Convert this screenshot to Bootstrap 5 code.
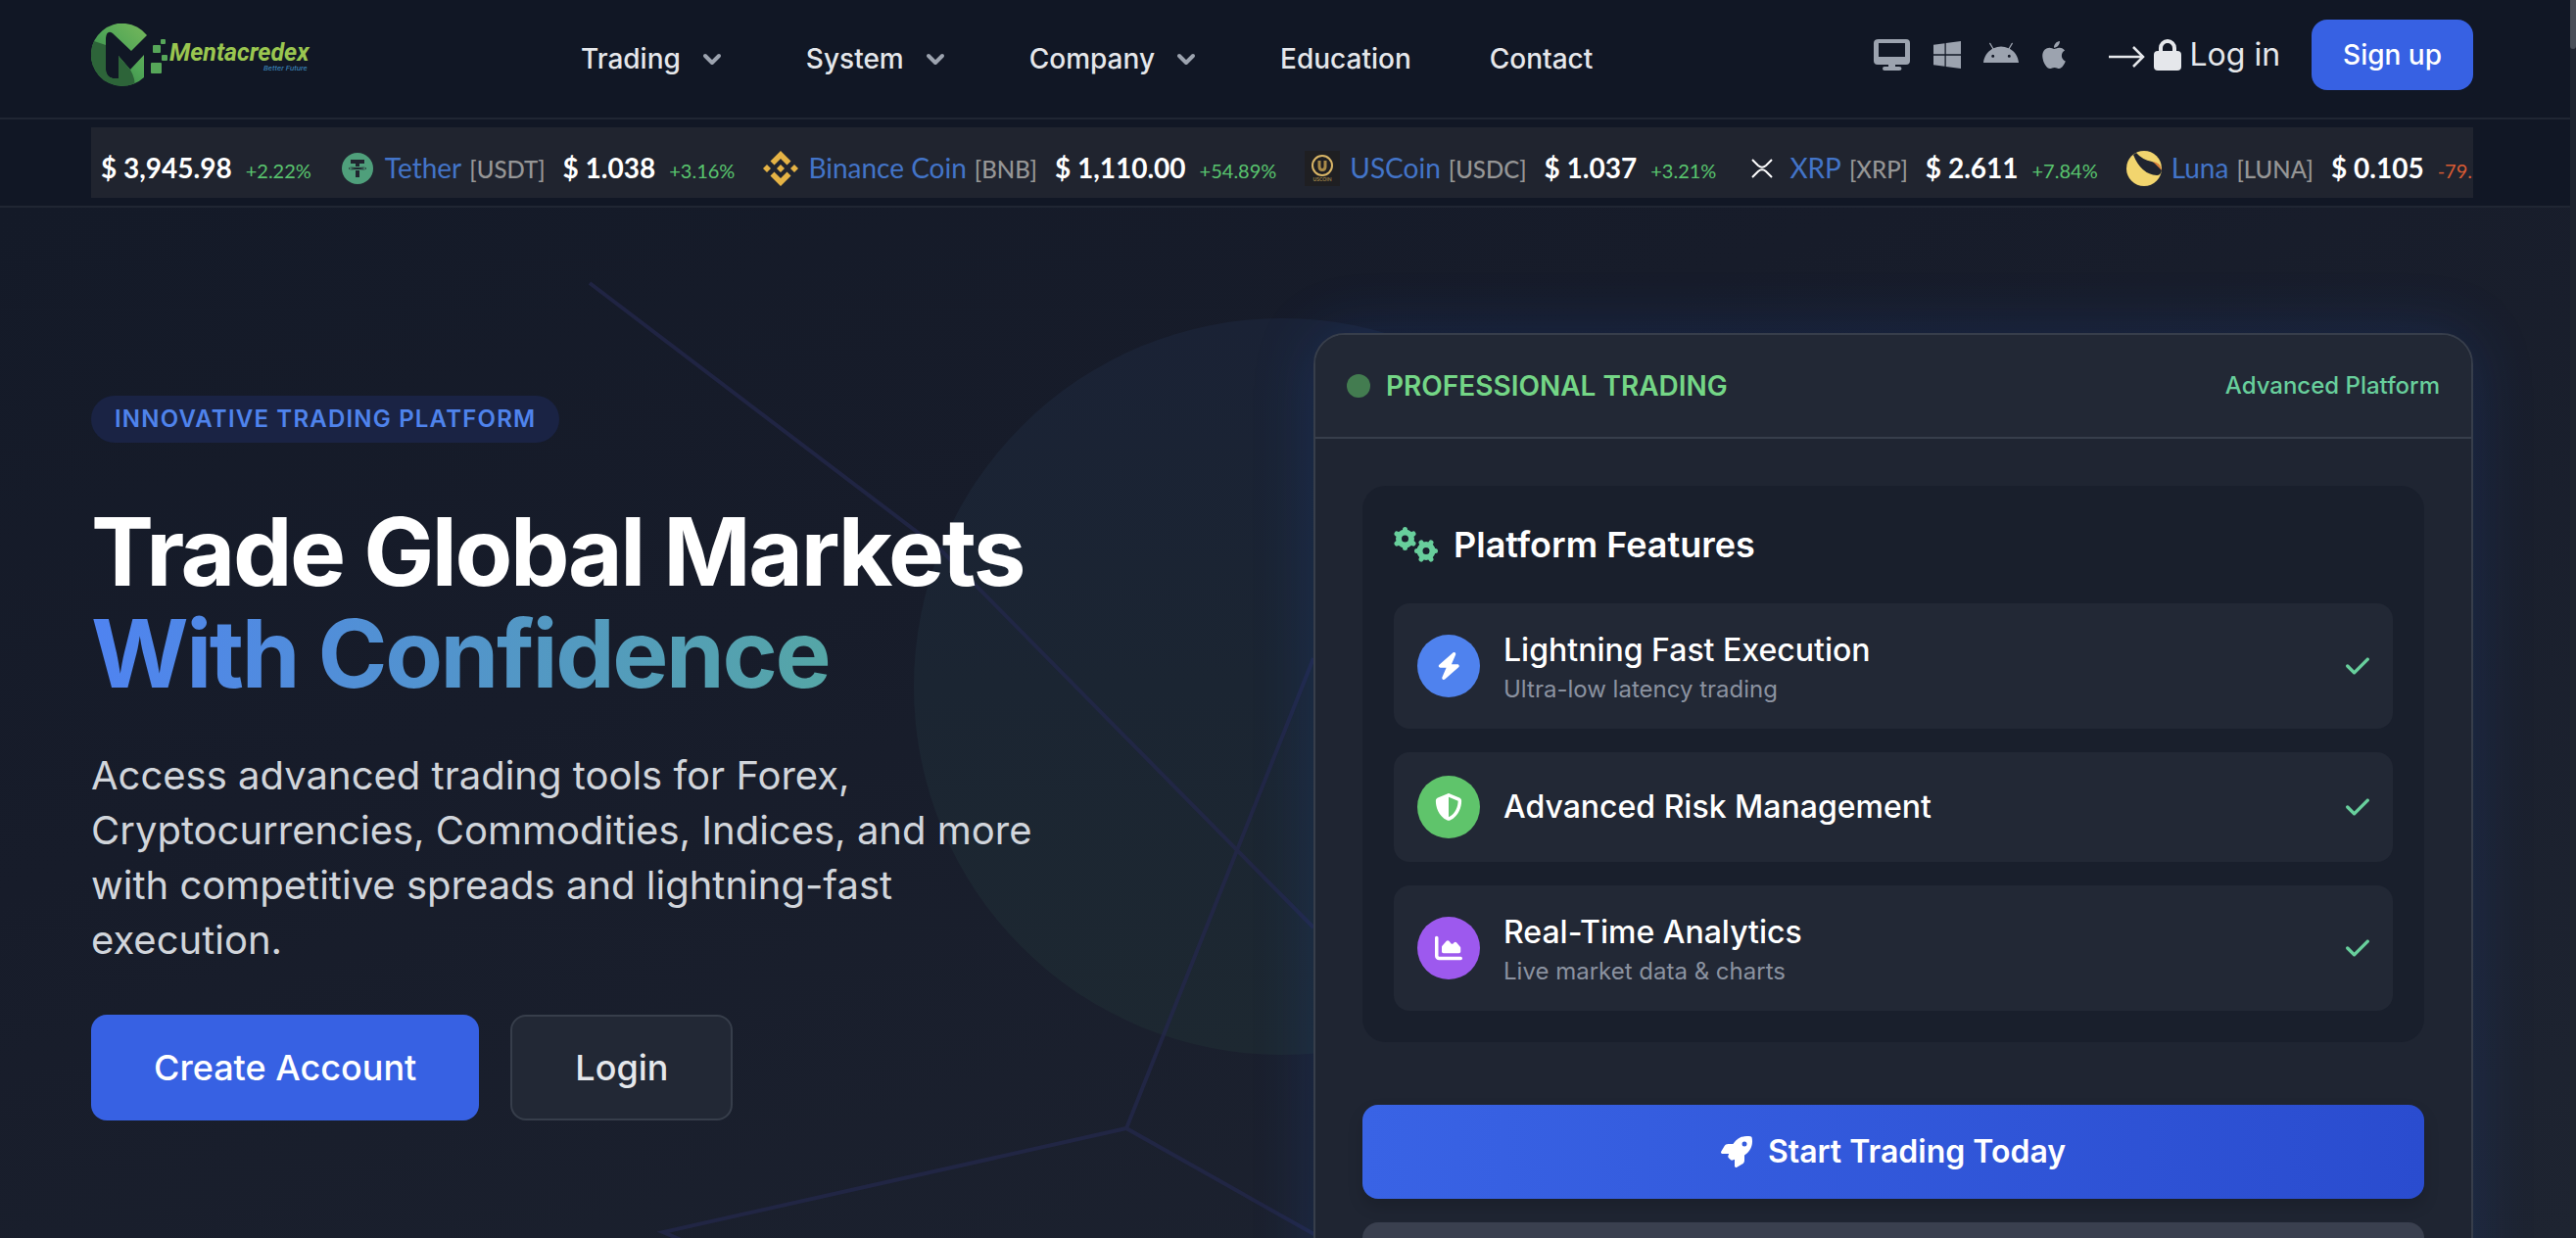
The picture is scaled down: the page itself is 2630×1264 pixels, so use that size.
<!DOCTYPE html>
<html lang="en">
<head>
<meta charset="utf-8">
<meta name="viewport" content="width=device-width, initial-scale=1">
<title>Mentacredex</title>
<link rel="stylesheet" href="https://cdn.jsdelivr.net/npm/bootstrap@5.3.0/dist/css/bootstrap.min.css">
<style>
:root{--ink:#111725;--line:#202633;--panel:#222835;--edge:#373e4b;--blue:#3761e3;--mint:#68cf9c}
body{font-family:Inter,"Liberation Sans",sans-serif;font-size:28px;background:var(--ink);color:#e5e7eb;height:100vh;overflow:hidden}
a{text-decoration:none}
.wrap{padding:0 105px 0 93px}
.topbar{border-bottom:2px solid var(--line);height:122px}
.topbar .nav-area{padding-bottom:8px}
.main-nav{gap:80px;margin-left:276px;padding-top:8px}
.main-nav a{color:#e5e7eb;font-weight:500;line-height:40px;gap:16px}
.chev{width:32px;height:32px;fill:none;stroke:#9ca3af;stroke-width:4;stroke-linecap:round;stroke-linejoin:round}
.platforms{gap:22px;fill:#9ca3af}
.login-link{color:#e5e7eb;font-size:32px;gap:8px;line-height:48px;margin-left:42px}
.btn{--bs-btn-color:#fff;--bs-btn-hover-color:#fff;border:0;border-radius:16px;font-weight:500}
.btn-signup{background:var(--blue);font-size:28px;line-height:40px;padding:16px 32px;margin-left:32px}
.ticker-strip{border-bottom:2px solid var(--line);padding-top:8px;padding-bottom:8px}
.ticker{background:#20242f;height:72px;font-family:Lato,"Liberation Sans",sans-serif;padding:12px 0 0 10px;gap:29px}
.coin{gap:8px;line-height:36px;flex:none}
.coin svg{width:36px;height:36px;margin-right:2px;align-self:center}
.coin-name{color:#4374c8;font-size:28px}
.coin-sym{color:#969696;font-size:24px;font-weight:500}
.coin-price{color:#fff;font-size:28px;font-weight:700;margin-left:10px}
.coin-up,.coin-down{color:#59c46e;font-size:20px;margin-left:6px}
.coin-down{color:#d95b33}
.hero{position:relative;height:calc(100vh - 212px);overflow:hidden;background:linear-gradient(160deg,#141a28 0%,#171c2a 35%,#1e2431 100%)}
.hero-art{position:absolute;inset:0;width:2618px;height:1052px}
.hero .wrap{position:relative;padding-top:128px}
.hero-row{--bs-gutter-x:64px}
.hero-copy{padding-top:64px}
.tagline{display:inline-block;vertical-align:top;background:#1a2344;color:#4f83ec;border-radius:24px;padding:0 24px;font-size:24px;line-height:48px;font-weight:600;letter-spacing:.05em}
h1{font-size:96px;line-height:104px;font-weight:700;letter-spacing:-.025em;color:#fff;margin:59px 0 45px}
h1 span{display:inline-block;background:linear-gradient(90deg,#4f83f1,#55a6a6);-webkit-background-clip:text;background-clip:text;color:transparent}
.intro{font-size:40px;line-height:56px;color:#d1d5db;max-width:1000px;margin-bottom:48px}
.cta-pair{gap:32px}
.btn-big{font-size:36px;line-height:52px;padding:28px 64px;background:var(--blue)}
.btn-ghost{background:var(--panel);border:2px solid var(--edge);padding:26px 64px;--bs-btn-color:#e5e7eb}
.panel{background:#1f2532;border:2px solid var(--edge);border-radius:32px;height:1200px;box-shadow:0 0 64px rgba(37,99,235,.17)}
.panel-head{background:var(--panel);border-bottom:2px solid var(--edge);border-radius:30px 30px 0 0;padding:32px;height:106px}
.panel-title{color:#74d686}
.panel-tag{color:var(--mint);font-size:24px;font-weight:500}
.dot{width:24px;height:24px;border-radius:50%;background:#437c50}
.panel-body{padding:48px}
.features{background:#191f2c;border-radius:24px;padding:32px}
.features h2{font-size:36px;line-height:56px;font-weight:600;color:#fff;gap:16px;margin:0 0 32px}
.feature{background:var(--panel);border-radius:16px;padding:24px;gap:24px}
.feature-icon{width:64px;height:64px;border-radius:50%}
.feature-icon svg{height:28px;fill:#fff}
.ico-blue{background:#4f82ee}
.ico-green{background:#5fc46b}
.ico-purple{background:#9d59ee}
.feature-title{font-size:32px;line-height:48px;font-weight:500;color:#fff}
.feature-note{font-size:24px;line-height:32px;color:#8b92a0}
.tick{width:24px;height:32px;fill:var(--mint)}
.btn-start{background:linear-gradient(90deg,#3963e5,#2a4ccf);font-size:32px;line-height:48px;font-weight:600;padding:24px;gap:16px;margin-top:64px;box-shadow:0 8px 16px rgba(0,0,0,.15)}
.btn-more{background:#3a404f;padding:24px;font-size:32px;line-height:48px;margin-top:24px}
.scroll-track{position:absolute;top:0;right:0;width:6px;height:100vh;background:#20242f}
.scroll-thumb{height:50px;background:#4a4e58;border-radius:0 0 4px 4px}
</style>
</head>
<body>
<header class="topbar wrap">
  <div class="nav-area d-flex align-items-center h-100">
    <a href="#" aria-label="Mentacredex home">
      <svg width="224" height="64" viewBox="0 0 224 64" class="d-block overflow-visible">
        <defs>
          <linearGradient id="leaf" x1="1" y1="0" x2="0" y2="1"><stop offset="0" stop-color="#7cba5c"/><stop offset=".5" stop-color="#4fa556"/><stop offset="1" stop-color="#2f7040"/></linearGradient>
          <clipPath id="emblem"><path d="M57 12A32 32 0 1 0 54 55V32L40 47 28 33V56L22 56Q15 54 15 47V15Q16 6 22 10L41 28Z"/></clipPath>
        </defs>
        <g clip-path="url(#emblem)"><rect width="64" height="64" fill="url(#leaf)"/><path d="M0 17L15 22V64H0Z" fill="#2d6439"/><path d="M0 50H15L28 33 40 47Q46 58 44 64H0Z" fill="#2d6439"/></g>
        <g fill="#56a659"><rect x="63" y="22" width="8" height="8" rx="1"/><rect x="71" y="16" width="5" height="5" rx="1"/><rect x="72" y="32" width="6" height="6" rx="1"/><rect x="61" y="40" width="11" height="11" rx="1"/></g>
        <text x="80" y="38" font-family="Roboto,sans-serif" font-size="25" font-weight="700" font-style="italic" fill="#9ac650">Mentacredex</text>
        <text x="176" y="48" font-family="Roboto,sans-serif" font-size="8" font-style="italic" fill="#3f8fc4">Better Future</text>
      </svg>
    </a>
    <nav class="main-nav d-flex align-items-center">
      <a href="#" class="d-flex align-items-center">Trading <svg class="chev" viewBox="0 0 32 32"><path d="M9 13l7 7 7-7"/></svg></a>
      <a href="#" class="d-flex align-items-center">System <svg class="chev" viewBox="0 0 32 32"><path d="M9 13l7 7 7-7"/></svg></a>
      <a href="#" class="d-flex align-items-center">Company <svg class="chev" viewBox="0 0 32 32"><path d="M9 13l7 7 7-7"/></svg></a>
      <a href="#">Education</a>
      <a href="#">Contact</a>
    </nav>
    <div class="d-flex align-items-center ms-auto">
      <div class="platforms d-flex align-items-center">
        <svg width="38" height="32" viewBox="0 0 38 32"><path fill-rule="evenodd" d="M5 0H33Q37 0 37 4V22Q37 26 33 26H22V28H26Q28.500 28 28.500 30T26 32H11Q9 32 9 30T11 28H15V26H4Q0 26 0 22V4Q0 0 5 0ZM5 4V18H32V4Z"/></svg>
        <svg width="30" height="32" viewBox="0 0 448 512"><path d="M0 93.700l183.600-25.300v177.400H0V93.700zm0 324.600l183.600 25.300V268.400H0v149.900zm203.800 28L448 480V268.400H203.800v177.900zm0-380.600v180.100H448V32L203.800 65.700z"/></svg>
        <svg width="36" height="32" viewBox="0 0 576 512"><path d="M420.550,301.930a24,24,0,1,1,24-24,24,24,0,0,1-24,24m-265.100,0a24,24,0,1,1,24-24,24,24,0,0,1-24,24m273.700-144.480,47.940-83a10,10,0,1,0-17.270-10h0l-48.540,84.070a301.250,301.250,0,0,0-246.560,0L116.180,64.450a10,10,0,1,0-17.270,10h0l47.940,83C64.530,202.220,8.240,285.550,0,384H576c-8.240-98.450-64.540-181.780-146.850-226.550"/></svg>
        <svg width="28" height="32" viewBox="0 0 384 512"><path d="M318.700 268.700c-.2-36.700 16.400-64.400 50-84.800-18.800-26.900-47.200-41.700-84.700-44.600-35.500-2.800-74.300 20.700-88.500 20.700-15 0-49.400-19.700-76.400-19.700C63.300 141.200 4 184.800 4 273.500q0 39.300 14.400 81.200c12.800 36.700 59 126.700 107.200 125.200 25.200-.6 43-17.900 75.800-17.900 31.800 0 48.300 17.900 76.400 17.900 48.600-.7 90.400-82.500 102.600-119.300-65.200-30.700-61.700-90-61.700-91.900zm-56.600-164.200c27.300-32.400 24.800-61.900 24-72.500-24.100 1.400-52 16.400-67.900 34.900-17.500 19.800-27.800 44.300-25.600 71.900 26.100 2 49.900-11.400 69.500-34.300z"/></svg>
      </div>
      <a href="#" class="login-link d-flex align-items-center">
        <svg width="38" height="32" viewBox="0 0 38 32" fill="none" stroke="#e5e7eb" stroke-width="2.500"><path d="M0 18H35M25 8L35 18 25 28"/></svg>
        <svg width="28" height="32" viewBox="0 0 28 32"><path d="M7 14V9A7 7 0 0 1 21 9V14" fill="none" stroke="#e5e7eb" stroke-width="4"/><rect y="12" width="28" height="20" rx="4" fill="#e5e7eb"/></svg>
        <span>Log in</span>
      </a>
      <button type="button" class="btn btn-signup">Sign up</button>
    </div>
  </div>
</header>

<section class="ticker-strip wrap" aria-label="Prices">
  <div class="ticker d-flex align-items-center overflow-hidden text-nowrap">
    <div class="coin d-flex align-items-baseline"><span class="coin-price ms-0">$ 3,945.98</span><span class="coin-up">+2.22%</span></div>
    <div class="coin d-flex align-items-baseline">
      <svg viewBox="0 0 36 36"><circle cx="18" cy="18" r="16" fill="#4f9f7b"/><path d="M11 9H25V13H20V16Q27 16.500 27 18T20 20V27H16V20Q9 19.500 9 18T16 16V13H11Z" fill="#20242f"/><ellipse cx="18" cy="18" rx="8" ry="1.500" fill="none" stroke="#4f9f7b"/></svg>
      <span class="coin-name">Tether</span><span class="coin-sym">[USDT]</span><span class="coin-price">$ 1.038</span><span class="coin-up">+3.16%</span></div>
    <div class="coin d-flex align-items-baseline">
      <svg viewBox="0 0 36 36" fill="#e5b345"><path d="M18 0L28.500 10.500 24.500 14.500 18 8 11.500 14.500 7.500 10.500ZM18 36L28.500 25.500 24.500 21.500 18 28 11.500 21.500 7.500 25.500ZM4 14L8 18 4 22 0 18ZM32 14L36 18 32 22 28 18ZM18 14L22 18 18 22 14 18Z"/></svg>
      <span class="coin-name">Binance Coin</span><span class="coin-sym">[BNB]</span><span class="coin-price">$ 1,110.00</span><span class="coin-up">+54.89%</span></div>
    <div class="coin d-flex align-items-baseline">
      <svg viewBox="0 0 36 36"><rect width="36" height="36" fill="#1f1f22"/><circle cx="18" cy="15" r="10" fill="none" stroke="#d9b566" stroke-width="2"/><path d="M15 10V16Q15 19.500 18 19.500T21 16V10" fill="none" stroke="#a98a48" stroke-width="3"/><text x="18" y="31" font-size="5" font-weight="700" text-anchor="middle" fill="#9c8248">USCOIN</text></svg>
      <span class="coin-name">USCoin</span><span class="coin-sym">[USDC]</span><span class="coin-price">$ 1.037</span><span class="coin-up">+3.21%</span></div>
    <div class="coin d-flex align-items-baseline">
      <svg viewBox="0 0 36 36" fill="none" stroke="#fff" stroke-width="2"><path d="M8 9L14 15Q18 18.500 22 15L28 9M8 27L14 21Q18 17.500 22 21L28 27"/></svg>
      <span class="coin-name">XRP</span><span class="coin-sym">[XRP]</span><span class="coin-price">$ 2.611</span><span class="coin-up">+7.84%</span></div>
    <div class="coin d-flex align-items-baseline">
      <svg viewBox="0 0 36 36"><circle cx="18" cy="18" r="18" fill="#f2d56e"/><path d="M7 4L10 2Q16 9 26 11L33 14 36 20Q35 25 31 25Q15 24 7 4Z" fill="#20242f"/><path d="M27 11Q35 12 36 20 33 17 27 11Z" fill="#dc8039"/></svg>
      <span class="coin-name">Luna</span><span class="coin-sym">[LUNA]</span><span class="coin-price">$ 0.105</span><span class="coin-down">-79.13%</span></div>
  </div>
</section>

<main class="hero">
  <svg class="hero-art" viewBox="0 0 2618 1052" aria-hidden="true">
    <defs><linearGradient id="orb" x1="0" y1="0" x2="0" y2="1"><stop offset="0" stop-color="#1a2235"/><stop offset=".5" stop-color="#1b2532"/><stop offset="1" stop-color="#1d2831"/></linearGradient></defs>
    <circle cx="1309" cy="489" r="376" fill="url(#orb)"/>
    <path d="M602 77L961 350 1341 735M1341 460L1150 940 1345 1050M1150 940L677 1046 700 1056" fill="none" stroke="#24284c" stroke-opacity=".75" stroke-width="4"/>
  </svg>
  <div class="wrap">
    <div class="row hero-row">
      <div class="col-6 hero-copy">
        <span class="tagline">INNOVATIVE TRADING PLATFORM</span>
        <h1>Trade Global Markets<br><span>With Confidence</span></h1>
        <p class="intro">Access advanced trading tools for Forex, Cryptocurrencies, Commodities, Indices, and more with competitive spreads and lightning-fast execution.</p>
        <div class="cta-pair d-flex">
          <button type="button" class="btn btn-big">Create Account</button>
          <button type="button" class="btn btn-big btn-ghost">Login</button>
        </div>
      </div>
      <div class="col-6">
        <section class="panel">
          <div class="panel-head d-flex align-items-center">
            <span class="dot me-3"></span>
            <span class="panel-title fw-semibold">PROFESSIONAL TRADING</span>
            <span class="panel-tag ms-auto">Advanced Platform</span>
          </div>
          <div class="panel-body">
            <div class="features">
              <h2 class="d-flex align-items-center">
                <svg width="45" height="36" viewBox="0 0 45 36" fill="none" stroke="#68cf9c" stroke-width="6" stroke-linecap="round">
                  <circle cx="11.500" cy="12" r="6.500"/><path stroke-width="5" d="M11.500 2.500V5M11.500 19V21.500M3 7L5.500 8.500M17.500 15.500L20 17M3 17L5.500 15.500M17.500 8.500L20 7"/>
                  <circle cx="33" cy="24.500" r="6.500"/><path stroke-width="5" d="M23.500 24.500H26M40 24.500H42.500M28 16L29.500 18.500M36.500 30.500L38 33M38 16L36.500 18.500M29.500 30.500L28 33"/>
                </svg>Platform Features</h2>
              <div class="d-flex flex-column gap-4">
                <div class="feature d-flex align-items-center">
                  <span class="feature-icon ico-blue d-flex align-items-center justify-content-center"><svg viewBox="0 0 448 512"><path d="M349.400 44.600c5.900-13.700 1.500-29.700-10.600-38.500s-28.600-8-39.900 1.800l-256 224c-10 8.800-13.600 22.900-8.900 35.300S50.700 288 64 288H175.500L98.600 467.400c-5.900 13.700-1.500 29.700 10.600 38.500s28.600 8 39.900-1.800l256-224c10-8.800 13.600-22.900 8.900-35.300s-16.600-20.700-30-20.700H272.500L349.400 44.600z"/></svg></span>
                  <div><div class="feature-title">Lightning Fast Execution</div><div class="feature-note">Ultra-low latency trading</div></div>
                  <svg class="tick ms-auto" viewBox="0 0 448 512"><path d="M438.600 105.400c12.500 12.500 12.500 32.800 0 45.300l-256 256c-12.500 12.500-32.800 12.500-45.300 0l-128-128c-12.500-12.500-12.500-32.800 0-45.300s32.800-12.500 45.300 0L160 338.700 393.400 105.400c12.500-12.500 32.800-12.500 45.300 0z"/></svg>
                </div>
                <div class="feature d-flex align-items-center">
                  <span class="feature-icon ico-green d-flex align-items-center justify-content-center"><svg viewBox="0 0 512 512"><path d="M256 0c4.600 0 9.200 1 13.400 2.900L457.700 82.800c22 9.300 38.400 31 38.300 57.200c-.5 99.200-41.300 280.700-213.600 363.200c-16.700 8-36.100 8-52.800 0C57.300 420.700 16.500 239.200 16 140c-.1-26.200 16.300-47.900 38.300-57.200L242.700 2.900C246.800 1 251.400 0 256 0zm0 66.800V444.800C394 378 431.100 230.100 432 141.400L256 66.800z"/></svg></span>
                  <div class="feature-title">Advanced Risk Management</div>
                  <svg class="tick ms-auto" viewBox="0 0 448 512"><path d="M438.600 105.400c12.500 12.500 12.500 32.800 0 45.300l-256 256c-12.500 12.500-32.800 12.500-45.300 0l-128-128c-12.500-12.500-12.500-32.800 0-45.300s32.800-12.500 45.300 0L160 338.700 393.400 105.400c12.500-12.500 32.800-12.500 45.300 0z"/></svg>
                </div>
                <div class="feature d-flex align-items-center">
                  <span class="feature-icon ico-purple d-flex align-items-center justify-content-center"><svg viewBox="0 0 512 512"><path d="M64 64c0-17.700-14.300-32-32-32S0 46.300 0 64V400c0 44.200 35.800 80 80 80H480c17.700 0 32-14.300 32-32s-14.300-32-32-32H80c-8.800 0-16-7.200-16-16V64zm96 288H448c17.700 0 32-14.300 32-32V251.800c0-7.600-2.700-15-7.700-20.800l-65.800-76.800c-12.100-14.200-33.700-15-46.900-1.800l-21 21c-10 10-26.400 9.200-35.400-1.600l-39.200-47c-12.600-15.100-35.700-15.400-48.700-.6L135.900 215c-5.100 5.800-7.900 13.300-7.900 21.100v84c0 17.700 14.300 32 32 32z"/></svg></span>
                  <div><div class="feature-title">Real-Time Analytics</div><div class="feature-note">Live market data &amp; charts</div></div>
                  <svg class="tick ms-auto" viewBox="0 0 448 512"><path d="M438.600 105.400c12.500 12.500 12.500 32.800 0 45.300l-256 256c-12.500 12.500-32.800 12.500-45.300 0l-128-128c-12.500-12.500-12.500-32.800 0-45.300s32.800-12.500 45.300 0L160 338.700 393.400 105.400c12.500-12.500 32.800-12.500 45.300 0z"/></svg>
                </div>
              </div>
            </div>
            <button type="button" class="btn btn-start w-100 d-flex align-items-center justify-content-center">
              <svg width="32" height="32" viewBox="0 0 512 512" fill="#fff"><path fill-rule="evenodd" d="M156.600 384.900L125.700 354c-8.500-8.500-11.500-20.800-7.700-32.200c3-8.900 7-20.500 11.800-33.800L24 288c-8.600 0-16.600-4.600-20.900-12.100s-4.200-16.700 .2-24.100l52.500-88.500c13-21.900 36.500-35.300 61.900-35.300l82.300 0c2.400-4 4.800-7.700 7.200-11.300C289.100-4.100 411.100-8.100 483.900 5.300c11.600 2.100 20.600 11.200 22.800 22.800c13.400 72.900 9.300 194.800-111.400 276.700c-3.500 2.400-7.300 4.800-11.300 7.200v82.300c0 25.400-13.400 49-35.300 61.900l-88.500 52.500c-7.400 4.400-16.600 4.500-24.100 .2s-12.100-12.200-12.100-20.900V380.800c-14.100 4.900-26.400 8.900-35.700 11.900c-11.200 3.600-23.400 .5-31.800-7.800zM384 168a40 40 0 1 0 0-80 40 40 0 1 0 0 80z"/></svg>
              Start Trading Today</button>
            <button type="button" class="btn btn-more w-100" aria-label="More">&nbsp;</button>
          </div>
        </section>
      </div>
    </div>
  </div>
</main>
<div class="scroll-track" aria-hidden="true"><div class="scroll-thumb"></div></div>
<script src="https://cdn.jsdelivr.net/npm/bootstrap@5.3.0/dist/js/bootstrap.bundle.min.js"></script>
</body>
</html>
